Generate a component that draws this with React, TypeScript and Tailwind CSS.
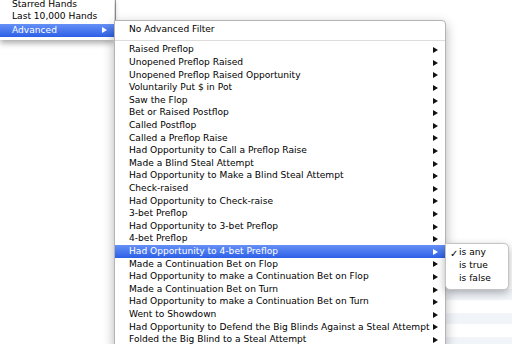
import React from "react";

const items = [
  "Raised Preflop",
  "Unopened Preflop Raised",
  "Unopened Preflop Raised Opportunity",
  "Voluntarily Put $ in Pot",
  "Saw the Flop",
  "Bet or Raised Postflop",
  "Called Postflop",
  "Called a Preflop Raise",
  "Had Opportunity to Call a Preflop Raise",
  "Made a Blind Steal Attempt",
  "Had Opportunity to Make a Blind Steal Attempt",
  "Check-raised",
  "Had Opportunity to Check-raise",
  "3-bet Preflop",
  "Had Opportunity to 3-bet Preflop",
  "4-bet Preflop",
  "Had Opportunity to 4-bet Preflop",
  "Made a Continuation Bet on Flop",
  "Had Opportunity to make a Continuation Bet on Flop",
  "Made a Continuation Bet on Turn",
  "Had Opportunity to make a Continuation Bet on Turn",
  "Went to Showdown",
  "Had Opportunity to Defend the Big Blinds Against a Steal Attempt",
  "Folded the Big Blind to a Steal Attempt",
];

const ACTIVE = "Had Opportunity to 4-bet Preflop";

function Arrow({ light }: { light?: boolean }) {
  return (
    <svg width="5" height="6" viewBox="0 0 5 6" className="shrink-0">
      <polygon points="0,0 5,3 0,6" fill={light ? "#ffffff" : "#111111"} />
    </svg>
  );
}

export default function App() {
  return (
    <div className="relative h-[344px] w-[512px] overflow-hidden bg-white font-['Lucida_Grande','DejaVu_Sans',sans-serif] text-[9.1px] text-black">
      {/* window behind the menus */}
      <div className="absolute left-[115px] top-0 h-[20px] w-[330px] border-l border-[#9a9a9a]" />
      {[289, 313, 337].map((y) => (
        <div key={y} className="absolute left-[445px] h-[11px] w-[67px] bg-[#f1f5fa]" style={{ top: y }} />
      ))}

      {/* left menu */}
      <div className="absolute left-0 top-[-1px] flex w-[114px] flex-col bg-white pb-[3px] shadow-[0_3px_6px_rgba(0,0,0,0.35)]">
        <div className="flex h-[12px] items-center pl-[12px]">Starred Hands</div>
        <div className="flex h-[12.6px] items-center pl-[12px]">Last 10,000 Hands</div>
        <div className="flex h-[13.6px] items-center justify-between bg-gradient-to-b from-[#6690f6] to-[#2d5fe7] pl-[12px] pr-[7px] text-white">
          <span>Advanced</span>
          <Arrow light />
        </div>
      </div>

      {/* main submenu */}
      <div className="absolute left-[114px] top-[20px] w-[332px] rounded-tr-[4px] border border-[#b4b4b4] bg-white pt-[3px] shadow-[0_4px_12px_rgba(0,0,0,0.3)]">
        <div className="flex flex-col">
          <div className="flex h-[12.6px] items-center pl-[14px]">No Advanced Filter</div>
          <div className="flex h-[7.4px] items-center">
            <div className="h-px w-full bg-[#dcdcdc]" />
          </div>
          {items.map((it) => {
            const on = it === ACTIVE;
            return (
              <div
                key={it}
                className={
                  on
                    ? "flex h-[12.6px] items-center justify-between bg-gradient-to-b from-[#6690f6] to-[#2d5fe7] pl-[14px] pr-[7px] text-white"
                    : "flex h-[12.6px] items-center justify-between pl-[14px] pr-[7px]"
                }
              >
                <span className="whitespace-nowrap">{it}</span>
                <Arrow light={on} />
              </div>
            );
          })}
        </div>
      </div>

      {/* value submenu */}
      <div className="absolute left-[445px] top-[243px] flex w-[64px] flex-col rounded-b-[5px] rounded-tr-[5px] border border-[#c4c4c4] bg-white pb-[4px] pt-[3px] shadow-[0_3px_8px_rgba(0,0,0,0.3)]">
        <div className="flex h-[12.6px] items-center">
          <span className="w-[13px] pl-[4px] text-[10px]">✓</span>
          <span>is any</span>
        </div>
        <div className="flex h-[12.6px] items-center pl-[13px]">is true</div>
        <div className="flex h-[12.6px] items-center pl-[13px]">is false</div>
      </div>
    </div>
  );
}
